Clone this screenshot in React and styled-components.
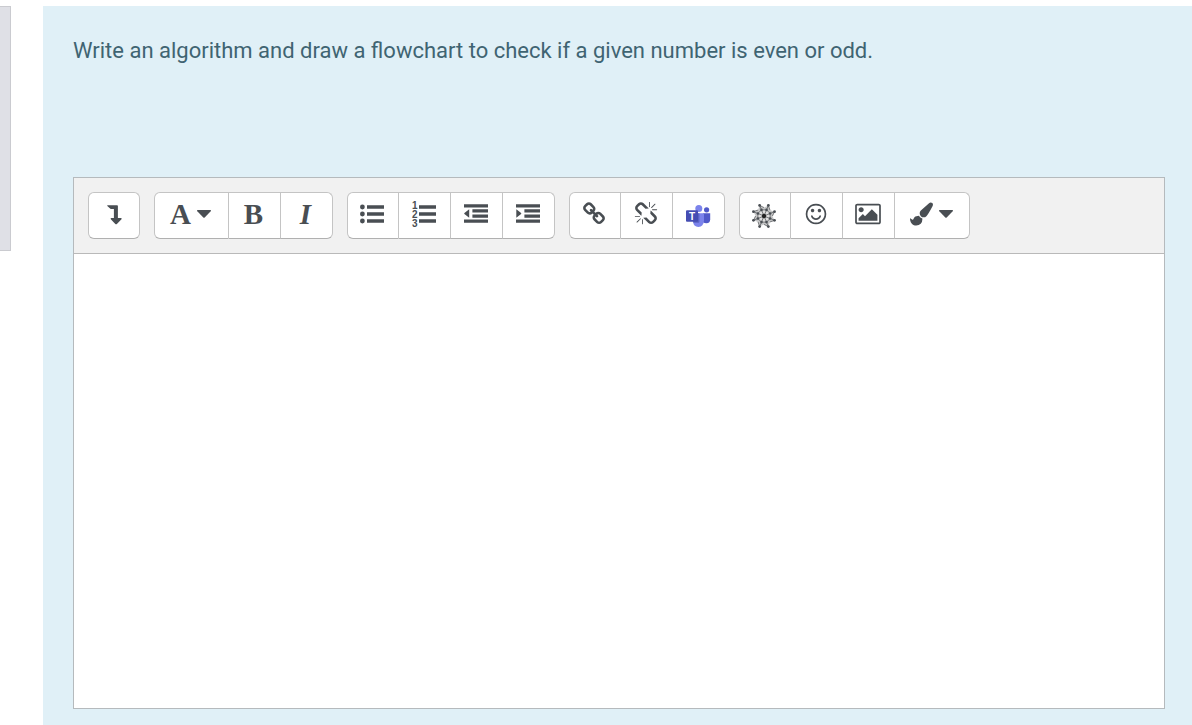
import React from 'react'
import styled, { createGlobalStyle } from 'styled-components'

const GlobalStyle = createGlobalStyle`
  * {
    box-sizing: border-box;
  }

  body {
    margin: 0;
    background: #fff;
    font-family: Roboto, "Liberation Sans", sans-serif;
  }
`

const Page = styled.div`
  display: flex;
  align-items: stretch;
  gap: 32px;
  min-height: 100vh;
  padding-top: 6px;
`

const QuestionInfo = styled.aside`
  align-self: flex-start;
  width: 11px;
  min-height: 245px;
  background: #dfe0e6;
  border: 1px solid #cacbd0;
  border-left: 0;
`

const Question = styled.main`
  flex: 1;
  display: flex;
  flex-direction: column;
  padding: 29px 27px 16px 30px;
  background: #e0f0f7;
`

const QuestionText = styled.label`
  display: block;
  margin-bottom: 110px;
  color: #3f6472;
  font-size: 22px;
  line-height: 32px;
`

const Editor = styled.div`
  flex: 1;
  display: flex;
  flex-direction: column;
  border: 1px solid #b5babd;
`

const Toolbar = styled.div`
  display: flex;
  flex-wrap: wrap;
  gap: 14px;
  padding: 14px;
  background: #f1f1f1;
  border-bottom: 1px solid #b9b9b9;
`

const Group = styled.div`
  display: flex;
`

const Button = styled.button`
  display: flex;
  align-items: center;
  justify-content: center;
  gap: 6px;
  width: ${p => (p.$wide ? 75 : 52)}px;
  height: 47px;
  padding: 0 2px 3px 0;
  color: #494e53;
  background: #fff;
  border: 1px solid #c4c4c4;
  border-bottom-color: #b0b0b0;
  border-left-width: 0;
  cursor: pointer;

  &:first-child {
    border-left-width: 1px;
    border-radius: 6px 0 0 6px;
  }

  &:last-child {
    border-radius: 0 6px 6px 0;
  }

  &:only-child {
    padding-right: 0;
    border-radius: 6px;
  }
`

const Letter = styled.span`
  font-family: "Liberation Serif", serif;
  font-size: 29px;
  font-weight: bold;
  font-style: ${p => (p.$italic ? 'italic' : 'normal')};
  line-height: 32px;
`

const Icon = styled.svg`
  display: block;
  flex: none;
  width: ${p => p.$width || 24}px;
  height: 24px;
  fill: currentColor;
`

const Answer = styled.textarea`
  flex: 1;
  display: block;
  width: 100%;
  padding: 12px;
  border: 0;
  outline: none;
  resize: none;
  color: #494e53;
  font: inherit;
  font-size: 22px;
`

const Caret = () => (
  <Icon $width={14} viewBox='0 0 14 24'>
    <path d='M0.6 8h12.8q1 .4.3 1.3L7.7 15.4q-.7.6-1.4 0L.3 9.3q-.7-.9.3-1.3z' />
  </Icon>
)

const LevelDown = () => (
  <Icon viewBox='0 0 24 24'>
    <path d='M5.6 3.2h9.5q.8 0 .8.8v12h3.1q1.2.2.5 1.2l-4.6 4.7q-.8.7-1.6 0l-4.5-4.7q-.7-1 .5-1.2h2.6V6.9H8.8q-.4 0-.7-.3L5.3 4q-.4-.6.3-.8z' />
  </Icon>
)

const Bars = () => (
  <path d='M7 3.2h17v3.5H7zM7 10.2h17v3.5H7zM7 17.2h17v3.5H7z' />
)

const ListUl = () => (
  <Icon viewBox='0 0 24 24'>
    <circle cx='2.4' cy='5' r='2.4' />
    <circle cx='2.4' cy='12' r='2.4' />
    <circle cx='2.4' cy='19' r='2.4' />
    <Bars />
  </Icon>
)

const Digit = styled.text`
  font-family: "Liberation Sans", sans-serif;
  font-size: 10px;
  font-weight: bold;
`

const ListOl = () => (
  <Icon viewBox='0 0 24 24' overflow='visible'>
    <Digit x='0' y='7'>1</Digit>
    <Digit x='0' y='16'>2</Digit>
    <Digit x='0' y='25'>3</Digit>
    <Bars />
  </Icon>
)

const Outdent = () => (
  <Icon viewBox='0 0 24 24'>
    <path d='M0 2.2h24v3.3H0zM8.4 7.3H24v3.3H8.4zM8.4 12.4H24v3.3H8.4zM0 17.5h24v3.3H0zM5.2 7.3v8.4L.4 11.9q-.4-.4 0-.8z' />
  </Icon>
)

const Indent = () => (
  <Icon viewBox='0 0 24 24'>
    <path d='M0 2.2h24v3.3H0zM8.4 7.3H24v3.3H8.4zM8.4 12.4H24v3.3H8.4zM0 17.5h24v3.3H0zM.3 7.3v8.4l4.8-3.8q.4-.4 0-.8z' />
  </Icon>
)

const Link = () => (
  <Icon viewBox='0 0 1792 1792'>
    <path d='M1520 1216q0-40-28-68l-208-208q-28-28-68-28-42 0-72 32 3 3 19 18.5t21.5 21.5 15 19 13 25.5 3.5 27.5q0 40-28 68t-68 28q-15 0-27.5-3.5t-25.5-13-19-15-21.5-21.5-18.5-19q-33 31-33 73 0 40 28 68l206 207q27 27 68 27 40 0 68-26l147-146q28-28 28-67zm-703-705q0-40-28-68l-206-207q-28-28-68-28-39 0-68 27l-147 146q-28 28-28 67 0 40 28 68l208 208q27 27 68 27 42 0 72-31-3-3-19-18.5t-21.5-21.5-15-19-13-25.5-3.5-27.5q0-40 28-68t68-28q15 0 27.5 3.5t25.5 13 19 15 21.5 21.5 18.5 19q33-31 33-73zm895 705q0 120-85 203l-147 146q-83 83-203 83-121 0-204-85l-206-207q-83-83-83-203 0-123 88-209l-88-88q-86 88-208 88-120 0-204-84l-208-208q-84-84-84-204t85-203l147-146q83-83 203-83 121 0 204 85l206 207q83 83 83 203 0 123-88 209l88 88q86-88 208-88 120 0 204 84l208 208q84 84 84 204z' />
  </Icon>
)

const Unlink = () => (
  <Icon viewBox='0 0 1792 1792'>
    <path d='M503 1271l-256 256q-10 9-23 9-12 0-23-9-9-10-9-23t9-23l256-256q10-9 23-9t23 9q9 10 9 23t-9 23zm169 41v320q0 14-9 23t-23 9-23-9-9-23v-320q0-14 9-23t23-9 23 9 9 23zm-224-224q0 14-9 23t-23 9h-320q-14 0-23-9t-9-23 9-23 23-9h320q14 0 23 9t9 23zm1264 128q0 120-85 203l-147 146q-83 83-203 83-121 0-204-85l-334-335q-21-21-42-56l239-18 273 274q28 28 68 28.5t68-27.5l147-146q28-28 28-67 0-40-28-68l-274-275 18-239q35 21 56 42l336 336q84 86 84 204zm-617-724l-239 18-273-274q-28-28-68-28-39 0-68 27l-147 146q-28 28-28 67 0 40 28 68l274 274-18 240q-35-21-56-42l-336-336q-84-86-84-204 0-120 85-203l147-146q83-83 203-83 121 0 204 85l334 335q21 21 42 56zm633 84q0 14-9 23t-23 9h-320q-14 0-23-9t-9-23 9-23 23-9h320q14 0 23 9t9 23zm-544-544v320q0 14-9 23t-23 9-23-9-9-23v-320q0-14 9-23t23-9 23 9 9 23zm407 151l-256 256q-11 9-23 9t-23-9q-9-10-9-23t9-23l256-256q10-9 23-9t23 9q9 10 9 23t-9 23z' />
  </Icon>
)

const TeamsLetter = styled.text`
  fill: #fff;
  font-family: "Liberation Sans", sans-serif;
  font-size: 10px;
  font-weight: bold;
  text-anchor: middle;
`

const Teams = () => (
  <Icon viewBox='0 0 24 24' overflow='visible'>
    <circle cx='20.6' cy='7.8' r='2.6' fill='#5059c9' />
    <path d='M17 11.2h7.2v6q0 4-3.8 4-2 0-3.4-1z' fill='#5059c9' />
    <circle cx='12.8' cy='6.4' r='3.5' fill='#7b83eb' />
    <path d='M7 11.2h11v7.6q-.4 6-5.6 6.2-5-.2-5.4-6z' fill='#7b83eb' />
    <path d='M7 11.2h6.4v8.6q0 1-1 1H7.4q-.4-1-.4-2.4z' fill='#5a62c3' />
    <rect x='0' y='8.2' width='12' height='11.6' rx='1' fill='#454db3' />
    <TeamsLetter x='6' y='17.6'>T</TeamsLetter>
  </Icon>
)

const ring = (radius, offset) => [...Array(8)].map((_, i) => {
  const a = (i + offset) * Math.PI / 4
  return [12 + Math.cos(a) * radius, 14 + Math.sin(a) * radius]
})

const outer = ring(11.4, 0.5)
const inner = ring(6.6, 0.5)
const notches = ring(8.4, 1)

const Web = () => (
  <Icon viewBox='0 0 24 24' overflow='visible'>
    <polygon points={outer.flatMap((p, i) => [p, notches[i]]).join(' ')} fill='#c4c5c6' />
    <g fill='none' stroke='#77797b' strokeWidth='1'>
      <polygon points={inner.join(' ')} fill='#dedede' />
      {outer.map(([x, y], i) => (
        <path key={i} d={`M12 14L${x} ${y}L${notches[i]}`} />
      ))}
    </g>
    {outer.map(([x, y], i) => <circle key={i} cx={x} cy={y} r='1.4' />)}
    {inner.map(([x, y], i) => <circle key={i} cx={x} cy={y} r='1.3' />)}
    <circle cx='12' cy='14' r='2.2' fill='#222' />
  </Icon>
)

const Smile = () => (
  <Icon viewBox='0 0 1792 1792'>
    <path d='M1262 1075q-37 121-138 195t-228 74-228-74-138-195q-8-25 4-48.5t38-31.5q25-8 48.5 4t31.5 38q25 80 92.5 129.5t151.5 49.5 151.5-49.5 92.5-129.5q8-26 32-38t49-4 37 31.5 4 48.5zm-494-435q0 53-37.5 90.5t-90.5 37.5-90.5-37.5-37.5-90.5 37.5-90.5 90.5-37.5 90.5 37.5 37.5 90.5zm512 0q0 53-37.5 90.5t-90.5 37.5-90.5-37.5-37.5-90.5 37.5-90.5 90.5-37.5 90.5 37.5 37.5 90.5zm256 256q0-130-51-248.5t-136.5-204-204-136.5-248.5-51-248.5 51-204 136.5-136.5 204-51 248.5 51 248.5 136.5 204 204 136.5 248.5 51 248.5-51 204-136.5 136.5-204 51-248.5zm128 0q0 209-103 385.5t-279.5 279.5-385.5 103-385.5-103-279.5-279.5-103-385.5 103-385.5 279.5-279.5 385.5-103 385.5 103 279.5 279.5 103 385.5z' />
  </Icon>
)

const Picture = () => (
  <Icon $width={26} viewBox='-64 0 1920 1792'>
    <path d='M576 576q0 80-56 136t-136 56-136-56-56-136 56-136 136-56 136 56 56 136zm1024 384v448h-1408v-192l320-320 160 160 512-512zm96-704h-1600q-13 0-22.5 9.5t-9.5 22.5v1216q0 13 9.5 22.5t22.5 9.5h1600q13 0 22.5-9.5t9.5-22.5v-1216q0-13-9.5-22.5t-22.5-9.5zm160 32v1216q0 66-47 113t-113 47h-1600q-66 0-113-47t-47-113v-1216q0-66 47-113t113-47h1600q66 0 113 47t47 113z' />
  </Icon>
)

const Brush = () => (
  <Icon $width={23} viewBox='0 0 1792 1792'>
    <path d='M1615 0q70 0 122 46.5t52 116.5q0 63-45 151-332 629-465 752-97 91-218 91-126 0-216.5-92.5t-90.5-219.5q0-128 92-212l638-579q59-54 131-54zm-909 1034q39 76 106.5 130t150.5 76l1 71q4 213-129.5 347t-348.5 134q-123 0-218-46.5t-152.5-127.5-86.5-183-29-220q7 5 41 30t62 44.5 59 36.5 46 17q41 0 55-37 25-66 57.5-112.5t69.5-76 88-47.5 103-25.5 125-10.5z' />
  </Icon>
)

const groups = [
  [{ label: 'Show more buttons', icon: <LevelDown /> }],
  [
    { label: 'Paragraph styles', icon: <Letter>A</Letter>, menu: true },
    { label: 'Bold', icon: <Letter>B</Letter> },
    { label: 'Italic', icon: <Letter $italic>I</Letter> }
  ],
  [
    { label: 'Unordered list', icon: <ListUl /> },
    { label: 'Ordered list', icon: <ListOl /> },
    { label: 'Outdent', icon: <Outdent /> },
    { label: 'Indent', icon: <Indent /> }
  ],
  [
    { label: 'Link', icon: <Link /> },
    { label: 'Unlink', icon: <Unlink /> },
    { label: 'Teams meeting', icon: <Teams /> }
  ],
  [
    { label: 'Diagram', icon: <Web /> },
    { label: 'Emoji picker', icon: <Smile /> },
    { label: 'Insert image', icon: <Picture /> },
    { label: 'Font colour', icon: <Brush />, menu: true }
  ]
]

const App = () => (
  <>
    <GlobalStyle />
    <Page>
      <QuestionInfo />
      <Question>
        <QuestionText htmlFor='answer'>
          Write an algorithm and draw a flowchart to check if a given number is even or odd.
        </QuestionText>
        <Editor>
          <Toolbar role='toolbar'>
            {groups.map((buttons, i) => (
              <Group key={i}>
                {buttons.map(({ label, icon, menu }) => (
                  <Button key={label} type='button' aria-label={label} $wide={menu}>
                    {icon}
                    {menu && <Caret />}
                  </Button>
                ))}
              </Group>
            ))}
          </Toolbar>
          <Answer id='answer' />
        </Editor>
      </Question>
    </Page>
  </>
)

export default App
